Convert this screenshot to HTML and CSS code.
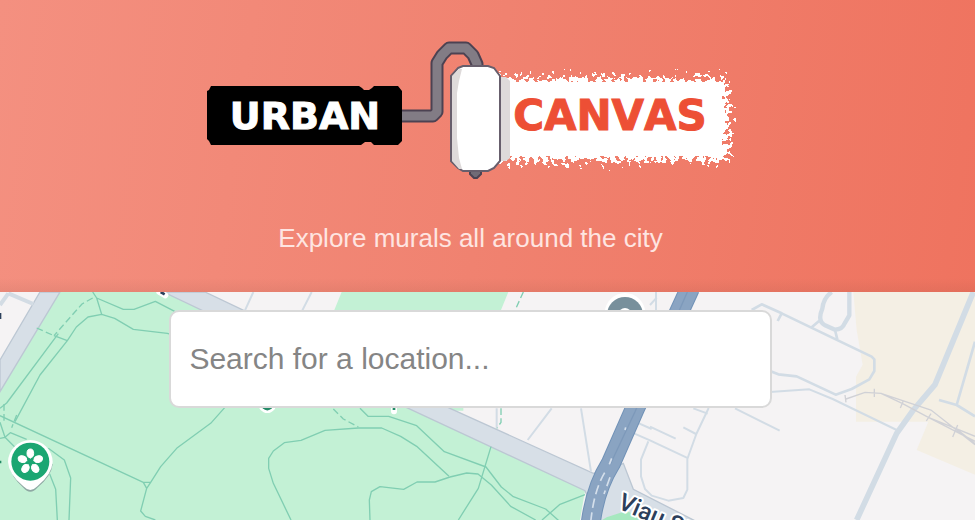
FILE: index.html
```html
<!DOCTYPE html>
<html lang="en">
<head>
<meta charset="utf-8">
<meta name="viewport" content="width=device-width, initial-scale=1">
<title>Urban Canvas</title>
<link rel="stylesheet" href="styles.css">
</head>
<body>
<header class="hero">
  <h1 class="brand">
    <svg class="logo" viewBox="204 40 530 140" role="img" aria-label="Urban Canvas">
      <defs>
        <filter id="rough" x="-10%" y="-20%" width="120%" height="140%">
          <feTurbulence type="fractalNoise" baseFrequency="0.22" numOctaves="2" seed="8" result="n"/>
          <feDisplacementMap in="SourceGraphic" in2="n" scale="36" xChannelSelector="R" yChannelSelector="G"/>
        </filter>
      </defs>
      <rect class="paint" x="496" y="79" width="230" height="81" filter="url(#rough)"/>
      <rect class="paint" x="500" y="82" width="220" height="74"/>
      <path class="paint-shade" d="M498 77h6l4 4v77l-4 3h-6z"/>
      <path class="rod-edge" d="M398 116h33l4-4V63l5-8 7-7h17l7 7 4 9v9"/>
      <path class="rod" d="M398 116h33l4-4V63l5-8 7-7h17l7 7 4 9v9"/>
      <path class="nub" d="M468 169h11v5l-4 4h-3l-4-4z"/>
      <path class="roller" d="M456 68l5-2h25l6 2 6 8v85l-6 7-6 3h-25l-5-3-7-7V76z"/>
      <path class="roller-shade" d="M450 76l7-7h3l-3 12-2 12v45l2 20 3 11h-3l-7-8z"/>
      <path class="handle" d="M209 86h148l3 2 2 2h5l3-2 2-2h24l4 5v50l-4 4h-24l-3-3h-6l-4 3H209l-2-4-2-2V91l2-1z"/>
      <text class="word word-urban" x="303" y="129">URBAN</text>
      <text class="word word-canvas" x="608" y="130">CANVAS</text>
    </svg>
  </h1>
  <p class="tagline">Explore murals all around the city</p>
</header>
<main class="map">
  <svg class="map-canvas" viewBox="0 36 2925 684" preserveAspectRatio="xMinYMin slice" aria-hidden="true">
    <rect class="land" y="36" width="2925" height="684"/>
    <path class="sand" d="M2560 36H2925V584L2750 510 2785 425H2568V290L2588 254 2570 150z"/>
    <path class="park" d="M180 36H490L1755 632 1740 720H0V335z"/>
    <path class="park" d="M1025 36H1525L1450 220H950zM1340 370h50v22h-50z"/>
    <path class="avenue" d="M120 36h60L0 335V240z"/>
    <path class="avenue" d="M490 36H615L1350 385 1780 580 1850 560 1870 550 1900 628 2100 730H1800L1755 632 1225 385z"/>
    <path class="park-strong" d="M1790 730l30-18 60-20 70 38z"/>
    <path class="side" d="M0 75l25-35M25 40l75 32"/>
    <g class="trail">
      <path d="M278 36l12 18 15 49M290 54l80 34h32l64-24 58 30"/>
      <path d="M0 385l20-16 155-208M45 425l75-140 82-103 27-41 35-30 41-8 39 12 56 33 102 12 20 6"/>
      <path d="M162 167l40 15M0 407l430 200h22M430 607l10 18 12-18 30-47 50-57 100-73 42-47M440 625l-18 68 14 16 30 11"/>
      <path d="M0 475l15-3 16-14 49 20M0 427l15 45 30 30M145 505l48 35 19 54-5 126M149 582l18 46 5 92"/>
      <path d="M873 720L820 610l-14-45v-30l14-22 33-25 50-7 72-30 100-7h70l57 25 48 30 97 90"/>
      <path d="M1080 385l24 24h62l84 28 83 78 125 46 46 60 36 29 97 37 45 40"/>
      <path d="M1110 720l-2-60 6-25 26-15 71 8 40-22h54l45-15 50-12 34 3 40 33 58 64 75 41M1375 720l60-95 38-125M1626 720l54-47 75-29"/>
      <path class="dashed" d="M278 54l-32 18-84 95M110 144l52 23M12 372v55M50 405l-15 38M1000 387l30 30 45 24M1570 36l-25 55M1503 385v42l-13 18"/>
    </g>
    <g class="street">
      <path d="M760 36l-25 55M935 36l-28 55M1490 385v58M1655 385l-72 95M1743 385l30 190M1968 36v55M1950 75l20-22"/>
      <path d="M1910 427l45 20M1895 457l55 24 115 54M1945 484l-22 55v50l12 38 20 20 50 15 45-8 12-25v-92l27-75 37-78M2080 385l43 16M2050 442l38 20M1950 440l77 36M2205 385l134 67M2310 336l118-8 70 29 192 93"/>
      <path class="medium" d="M2255 90l30-17 60 27-12 23M2345 100l270 130 8 8v35l-15 25-53 29-48 17-117-55-55-6-25-10M2435 142l23-20M2505 150l7 28M2817 360l53 15 55 34M2870 375l55-190"/>
      <path class="large" d="M2495 36q-25 18-28 50-16 38 8 50l30 13q22 0 29-19l14-24V36"/>
      <path class="major" d="M2920 36l-115 278-65 76-50 70-120 260"/>
    </g>
    <path class="rail" d="M2535 345l3 22M2538 357l57-20 48 3 150 50 132 104M2623 326v25M2710 362l-9 22M2793 401l-14 22M2643 340l65 31 77 41 140 57M2785 412l140 72M2785 412l85 35 55 44M2873 435l-15 36"/>
    <path class="highway-edge" d="M2070 25L1905 385l-72 164q-50 80-62 191"/>
    <path class="highway" d="M2070 25L1905 385l-72 164q-50 80-62 191"/>
    <path class="highway-line" d="M2062 36L1905 395l-75 160"/>
    <path class="highway-mark" d="M1877 442l-2 8M1835 535l-7 18M1814 578q-33 55-42 150M1830 592l-18 50"/>
    <text class="road-name" transform="translate(1850 684) rotate(23)">Viau St</text>
    <g class="place-halo"><path d="M478 36l18 10M787 382q15 16 30 0M1182 382v12"/></g>
    <g class="place-label"><path class="place-dark" d="M482 36l12 7M0 99v18"/><path d="M0 542v8M790 382q12 10 24 0M1182 382v8"/></g>
    <circle class="pin-halo" cx="1875" cy="100" r="61"/>
    <circle class="pin-grey" cx="1875" cy="105" r="54"/>
    <circle class="pin-dot" cx="1875" cy="103" r="19"/>
    <path class="pin-shadow" d="M28 555q5 36 42 68 21 24 42 0 43-35 46-71z"/>
    <path class="pin-halo" d="M91 480a67 67 0 0 1 67 66q-2 37-46 73-21 22-42 0-44-36-46-73a67 67 0 0 1 67-66z"/>
    <circle class="pin-green" cx="91" cy="545" r="57"/>
    <g class="petals" transform="translate(91 545)">
      <ellipse cy="-25" rx="10" ry="13"/>
      <ellipse cy="-25" rx="10" ry="13" transform="rotate(72)"/>
      <ellipse cy="-25" rx="10" ry="13" transform="rotate(144)"/>
      <ellipse cy="-25" rx="10" ry="13" transform="rotate(216)"/>
      <ellipse cy="-25" rx="10" ry="13" transform="rotate(288)"/>
      <path d="M0-20V-9M19-6L9-3M12 16L6 8M-12 16L-6 8M-19-6L-9-3"/>
    </g>
  </svg>
  <form class="search" role="search">
    <input class="search-input" type="text" aria-label="Search for a location" placeholder="Search for a location...">
  </form>
</main>
</body>
</html>
```
FILE: styles.css
```css
* {
  box-sizing: border-box;
}

body {
  margin: 0;
  min-height: 100vh;
  display: flex;
  flex-direction: column;
  overflow: hidden;
  font-family: "Liberation Sans", Arial, sans-serif;
}

.hero {
  display: flex;
  flex-direction: column;
  align-items: center;
  gap: 42px;
  padding: 40px 34px 38px 0;
  background:
    linear-gradient(to top, rgba(90, 50, 40, 0.08), transparent 14px),
    linear-gradient(98deg, #f49080, #f08270 50%, #ef735f);
}

.brand {
  width: 100%;
  max-width: 530px;
  margin: 0;
}

.logo {
  display: block;
  width: 100%;
}

.paint { fill: #fff; }
.paint-shade { fill: #dedada; }
.rod-edge,
.rod { fill: none; stroke-linejoin: round; }
.rod-edge { stroke: #4c4252; stroke-width: 13; }
.rod { stroke: #827c85; stroke-width: 9; }
.nub { fill: #716b76; stroke: #4c4252; stroke-width: 2; }
.roller { fill: #fff; stroke: #675e6c; stroke-width: 2; }
.roller-shade { fill: #dedada; }
.handle { fill: #000; }

.word {
  font-family: "DejaVu Sans", sans-serif;
  font-weight: 700;
  font-kerning: none;
  text-anchor: middle;
}

.word-urban { fill: #fff; stroke: #fff; font-size: 38px; }
.word-canvas { fill: #ed4f35; stroke: #ed4f35; font-size: 42px; }

.tagline {
  margin: 0;
  font-size: 26px;
  line-height: 32px;
  color: #fee5e1;
}

.map {
  position: relative;
  flex: 1;
  padding: 18px 34px 18px 0;
  background: #f5f3f4;
}

.map-canvas {
  position: absolute;
  inset: 0;
  width: 100%;
  height: 100%;
}

.land { fill: #f5f3f4; }
.sand { fill: #f4efe4; }
.park { fill: #c3f1d5; }
.park-strong { fill: #a6e8bf; }
.avenue { fill: #d7dfe7; stroke: #bcc7d3; stroke-width: 4; }
.side { fill: none; stroke: #d3dce4; stroke-width: 12; }
.trail { fill: none; stroke: #80ceb2; stroke-width: 4; stroke-linejoin: round; }
.dashed { stroke-dasharray: 20 10; }
.street { fill: none; stroke: #d2dce5; stroke-width: 6; stroke-linejoin: round; }
.medium { stroke-width: 8; }
.large { stroke-width: 13; }
.major { stroke-width: 17; }
.rail { fill: none; stroke: #d0d1d6; stroke-width: 4; }
.highway-edge { fill: none; stroke: #7192b7; stroke-width: 60; }
.highway { fill: none; stroke: #8aa4c2; stroke-width: 54; }
.highway-line { fill: none; stroke: #7d99ba; stroke-width: 4; }
.highway-mark { fill: none; stroke: #d4dfeb; stroke-width: 5; stroke-dasharray: 28 14; }

.road-name {
  font-family: Roboto, sans-serif;
  font-size: 72px;
  font-weight: 500;
  fill: #2c405c;
  stroke: #fff;
  stroke-width: 12;
  stroke-linejoin: round;
  paint-order: stroke;
}

.place-halo { fill: none; stroke: #fff; stroke-width: 18; stroke-linecap: round; }
.place-label { fill: none; stroke: #238a66; stroke-width: 8; }
.place-dark { stroke: #2c405c; }
.pin-halo { fill: #fff; }
.pin-grey { fill: #78909c; }
.pin-dot { fill: #fff; }
.pin-shadow { fill: #8fa9a4; }
.pin-green { fill: #1ba672; }
.petals { fill: #fff; stroke: #fff; stroke-width: 3; }

.search {
  position: relative;
  width: 64%;
  margin: 0 auto;
}

.search-input {
  display: block;
  width: 100%;
  padding: 30px 18px;
  border: 2px solid #d9d9d9;
  border-radius: 10px;
  background: #fff;
  color: #333;
  font-family: inherit;
  font-size: 30px;
  line-height: 34px;
}

.search-input::placeholder {
  color: #858585;
  opacity: 1;
}
```
